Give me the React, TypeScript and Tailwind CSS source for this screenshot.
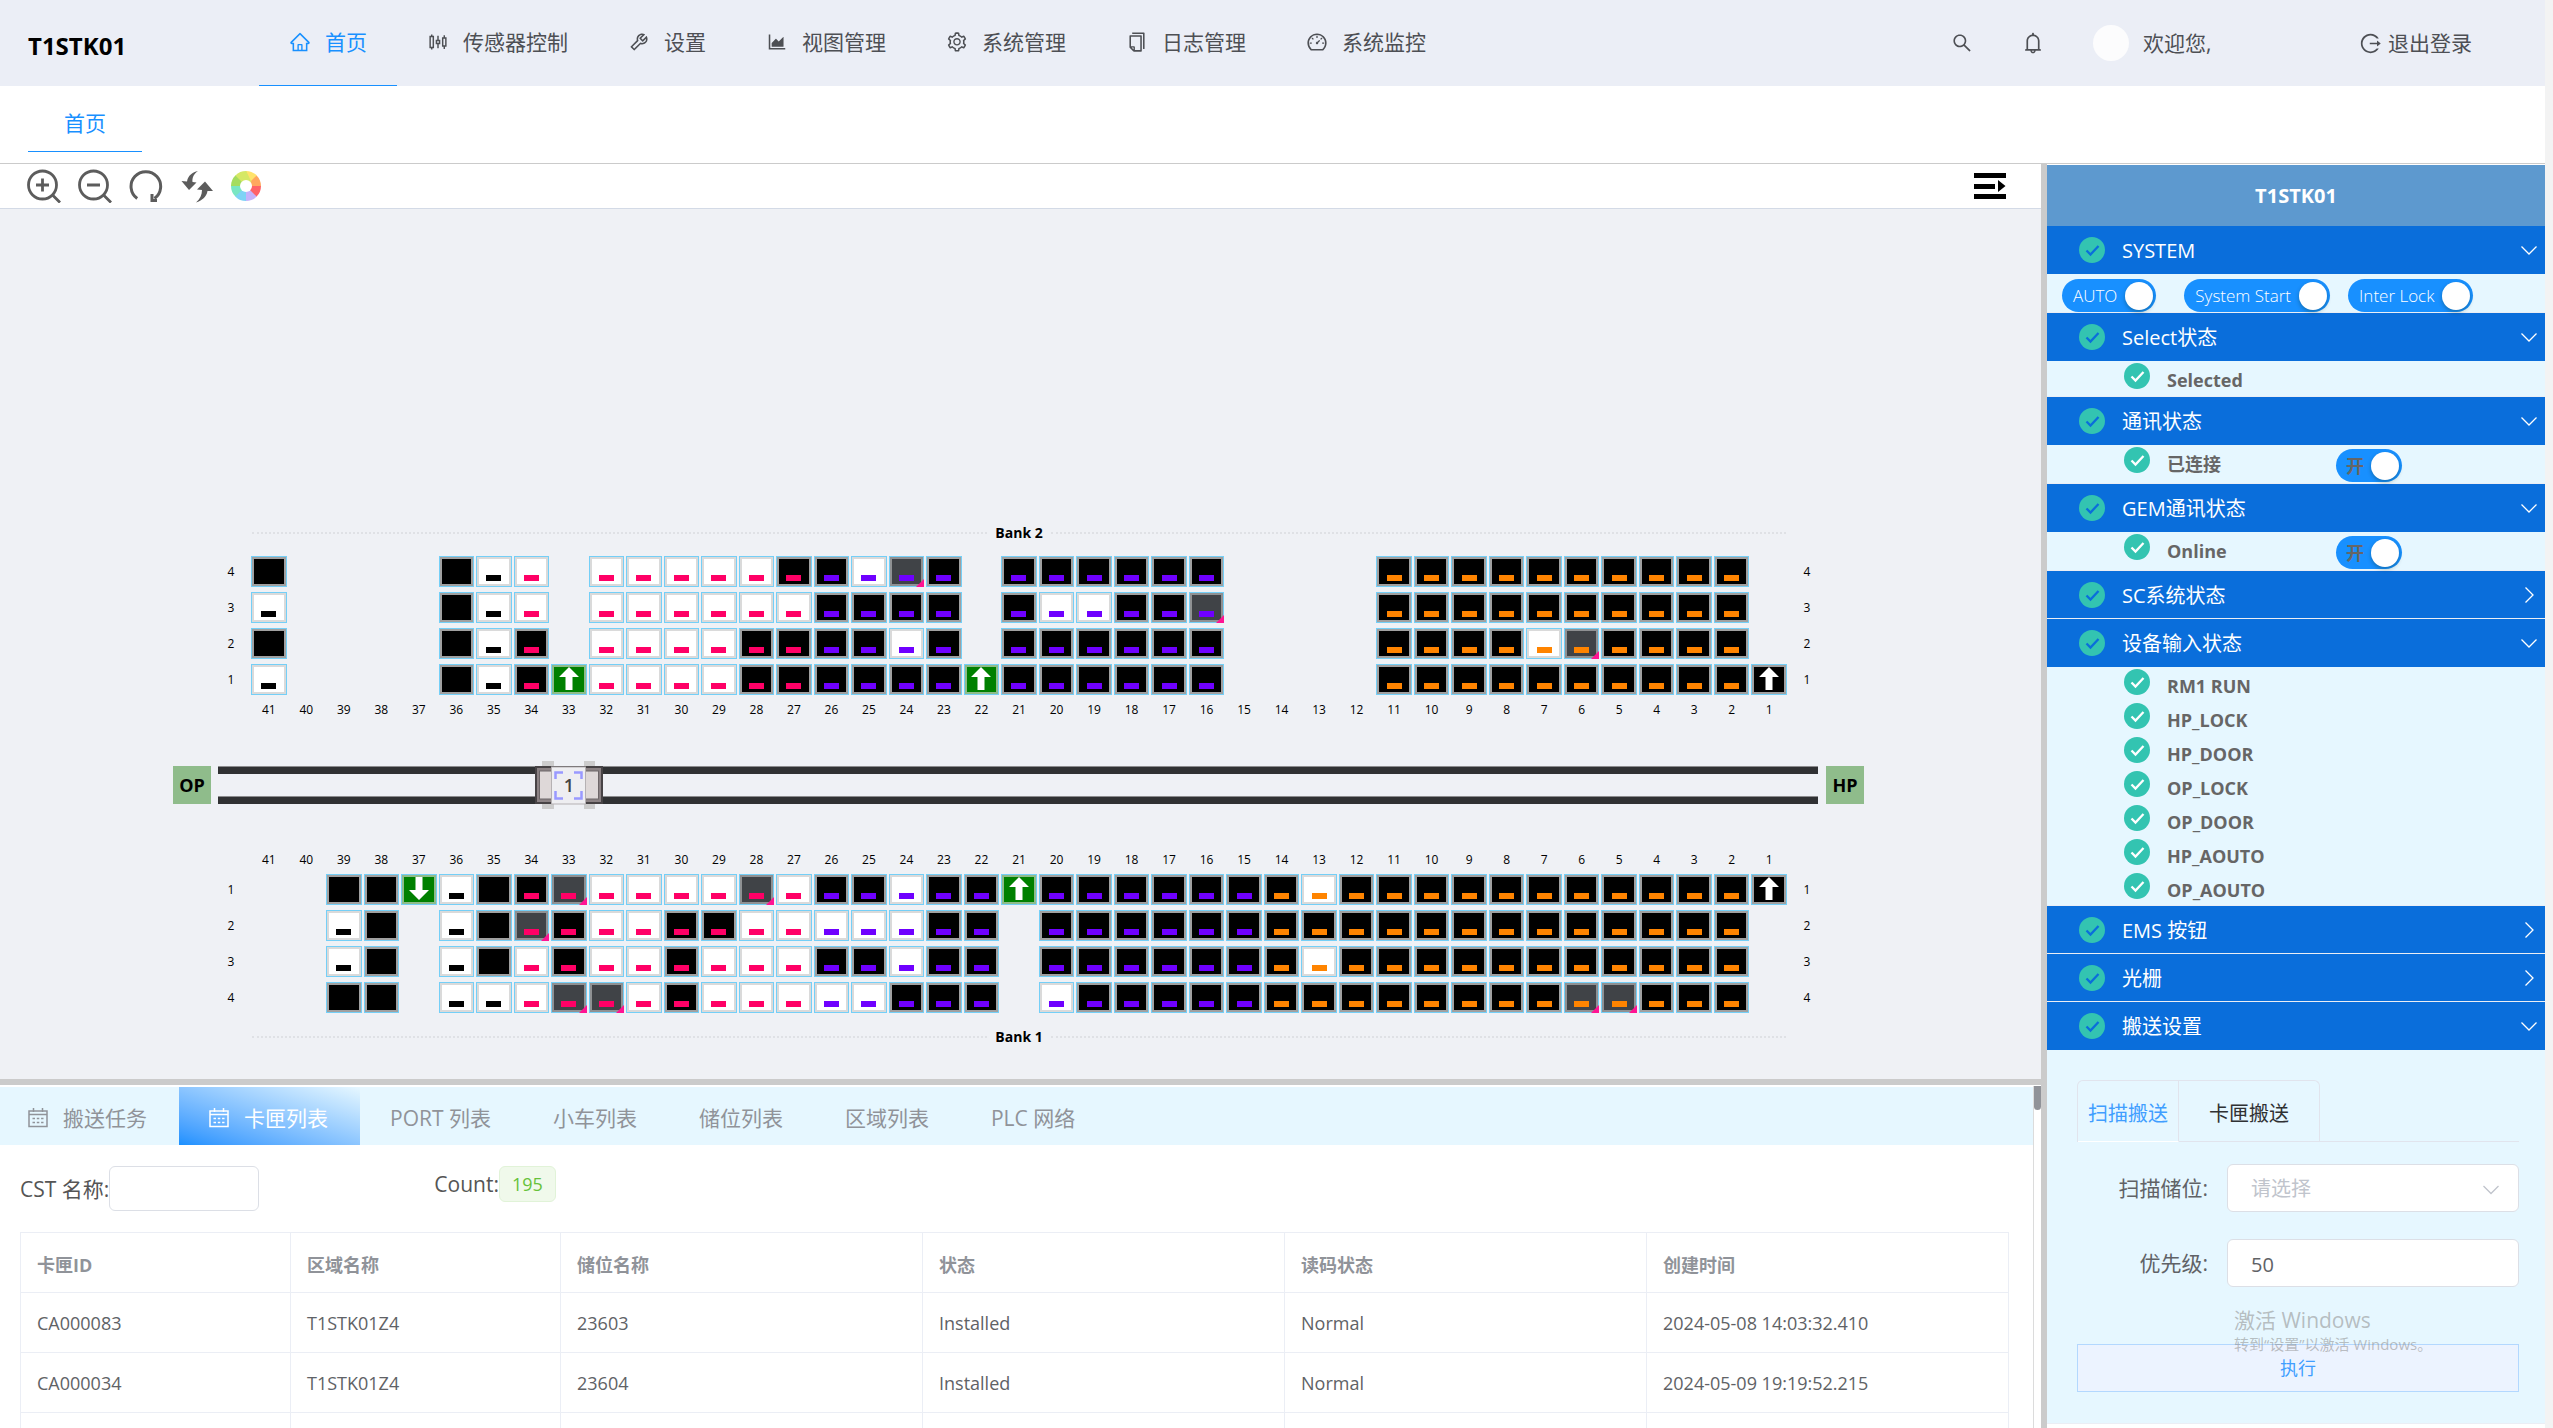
import clsx from "clsx";
import { useState } from "react";
import type { ReactNode } from "react";
import {
  AiOutlineAreaChart,
  AiOutlineBell,
  AiOutlineCopy,
  AiOutlineDashboard,
  AiOutlineHome,
  AiOutlineLogout,
  AiOutlineSearch,
  AiOutlineSetting,
  AiOutlineSliders,
  AiOutlineTool,
} from "react-icons/ai";

const navItems = [
  { title: "首页", icon: AiOutlineHome },
  { title: "传感器控制", icon: AiOutlineSliders },
  { title: "设置", icon: AiOutlineTool },
  { title: "视图管理", icon: AiOutlineAreaChart },
  { title: "系统管理", icon: AiOutlineSetting },
  { title: "日志管理", icon: AiOutlineCopy },
  { title: "系统监控", icon: AiOutlineDashboard },
];

const listTabs = [
  { title: "搬送任务", icon: true },
  { title: "卡匣列表", icon: true },
  { title: "PORT 列表" },
  { title: "小车列表" },
  { title: "储位列表" },
  { title: "区域列表" },
  { title: "PLC 网络" },
];

const inputStates = ["RM1 RUN", "HP_LOCK", "HP_DOOR", "OP_LOCK", "OP_DOOR", "HP_AOUTO", "OP_AOUTO"];

const columns = Array.from({ length: 41 }, (_, i) => 41 - i);

// one char per shelf, bay 41 -> 1
// . none, K disabled, B empty, W stored, G reserved, U/D port, A manual port
const bank2 = [
  { level: 4, cells: "K....KWW.WWWWWBBWGB.BBBBBB....BBBBBBBBBB." },
  { level: 3, cells: "W....KWW.WWWWWWBBBB.BWWBBG....BBBBBBBBBB." },
  { level: 2, cells: "K....KWB.WWWWBBBBWB.BBBBBB....BBBBWGBBBB." },
  { level: 1, cells: "W....KWBUWWWWBBBBBBUBBBBBB....BBBBBBBBBBA" },
];
const bank1 = [
  { level: 1, cells: "..KKDWKBGWWWWGWBBWBBUBBBBBBBWBBBBBBBBBBBA" },
  { level: 2, cells: "..WK.WKGBWWBBWWWWWBB.BBBBBBBBBBBBBBBBBBB." },
  { level: 3, cells: "..WK.WKWBWWBWWWBBWBB.BBBBBBBWBBBBBBBBBBB." },
  { level: 4, cells: "..KK.WWWGGWBWWWWWBBB.WBBBBBBBBBBBBBGGBBB." },
];

const cassettes = [
  { id: "CA000083", zone: "T1STK01Z4", shelf: "23603", state: "Installed", read: "Normal", time: "2024-05-08 14:03:32.410" },
  { id: "CA000034", zone: "T1STK01Z4", shelf: "23604", state: "Installed", read: "Normal", time: "2024-05-09 19:19:52.215" },
  { id: "", zone: "", shelf: "", state: "", read: "", time: "" },
];

function zoneColor(bay: number) {
  if (bay >= 35) return "bg-black";
  if (bay >= 27) return "bg-[#ff0066]";
  if (bay >= 15) return "bg-[#6f00ff]";
  return "bg-[#ff8400]";
}

function Arrow({ down }: { down?: boolean }) {
  return (
    <svg viewBox="0 0 20 23" className={clsx("h-[23px] w-5", down && "rotate-180")}>
      <path d="M10 0 20 10H13.5V23H6.5V10H0Z" fill="#fff" />
    </svg>
  );
}

function Shelf({ type, bay }: { type: string; bay: number }) {
  if (type === ".") return <div />;
  const port = type === "U" || type === "D";
  return (
    <div className="relative mx-px h-[31px] border border-[#74cff7]">
      <div
        className={clsx(
          "flex h-full w-full justify-center border-2",
          type === "W" && "border-[#dadada] bg-white",
          type === "G" && "border-[#8f9193] bg-[#404347]",
          port && "border-[#8fbc8b] bg-[#008000]",
          (type === "B" || type === "K" || type === "A") && "border-[#a0a0a0] bg-black"
        )}
      >
        {(port || type === "A") && <Arrow down={type === "D"} />}
        {(type === "B" || type === "W" || type === "G") && (
          <span className={clsx("mt-4 h-[6px] w-[15px]", zoneColor(bay))} />
        )}
      </div>
      {type === "G" && (
        <svg viewBox="0 0 8 8" className="absolute -right-px -bottom-px h-2 w-2">
          <path d="M8 0V8H0Z" fill="#ff1493" />
        </svg>
      )}
    </div>
  );
}

function BankRow({ level, cells }: { level: number; cells: string }) {
  return (
    <div className="flex items-center text-[12px] leading-4">
      <span className="w-[38px] text-center">{level}</span>
      <div className="grid flex-1 grid-cols-[repeat(41,minmax(0,1fr))]">
        {columns.map((bay, i) => (
          <Shelf key={bay} bay={bay} type={cells[i]} />
        ))}
      </div>
      <span className="w-[38px] text-center">{level}</span>
    </div>
  );
}

function BayNumbers() {
  return (
    <div className="mx-[38px] grid grid-cols-[repeat(41,minmax(0,1fr))] text-center text-[12px] leading-4">
      {columns.map((bay) => (
        <span key={bay}>{bay}</span>
      ))}
    </div>
  );
}

function BankTitle({ title }: { title: string }) {
  return (
    <div className="mx-10 flex items-center gap-2 text-[14px] leading-5 font-bold">
      <span className="flex-1 border-t-2 border-dotted border-[#dfe1e5]" />
      {title}
      <span className="flex-1 border-t-2 border-dotted border-[#dfe1e5]" />
    </div>
  );
}

function Crane() {
  return (
    <svg viewBox="0 0 68 48" className="absolute top-1/2 left-[22%] h-12 w-[68px] -translate-y-1/2">
      <path d="M7 0h12v48H7ZM49 0h11v48H49Z" fill="#cccccc" />
      <rect x="1" y="6" width="66" height="36" fill="#8b8284" stroke="#474345" strokeWidth="2" />
      <rect x="4.500" y="10" width="59" height="28" fill="#ded8d8" stroke="#6d6668" />
      <rect x="16.500" y="6" width="34" height="37" fill="#eeeef1" stroke="#b5b1b3" />
      <path
        d="M20.500 18V11.500H28M39 11.500H46.500V18M46.500 30V37.500H39M28 37.500H20.500V30"
        fill="none"
        stroke="#9999ff"
        strokeWidth="2.500"
      />
      <text x="34" y="31" textAnchor="middle" fontSize="18" fontWeight="600" fill="#444">
        1
      </text>
    </svg>
  );
}

function StockerMap() {
  return (
    <div className="flex flex-1 flex-col justify-end bg-[#eff1f5] pr-[177px] pb-8 pl-[173px] text-black">
      <div className="mr-[38px] ml-[39px]">
        <BankTitle title="Bank 2" />
        <div className="mt-[13px] flex flex-col gap-[5px]">
          {bank2.map((row) => (
            <BankRow key={row.level} {...row} />
          ))}
        </div>
        <div className="mt-[7px]">
          <BayNumbers />
        </div>
      </div>
      <div className="my-12 flex h-[38px] items-center text-[18px] leading-6 font-bold">
        <span className="flex h-full w-[38px] items-center justify-center bg-[#8fbc8b]">OP</span>
        <div className="relative mr-2 ml-[7px] flex h-full flex-1 flex-col justify-between">
          <span className="h-2 border-t border-[#8c8c8e] bg-[#303133]" />
          <span className="h-2 border-t border-[#8c8c8e] bg-[#303133]" />
          <div className="absolute inset-y-0 left-0 w-[90%]">
            <Crane />
          </div>
        </div>
        <span className="flex h-full w-[38px] items-center justify-center bg-[#8fbc8b]">HP</span>
      </div>
      <div className="mr-[38px] ml-[39px]">
        <BayNumbers />
        <div className="mt-[6px] flex flex-col gap-[5px]">
          {bank1.map((row) => (
            <BankRow key={row.level} {...row} />
          ))}
        </div>
        <div className="mt-[14px]">
          <BankTitle title="Bank 1" />
        </div>
      </div>
    </div>
  );
}

function CalendarIcon() {
  return (
    <svg viewBox="0 0 20 20" className="h-5 w-5" fill="none" stroke="currentColor" strokeWidth="1.500">
      <path d="M1 3H19V18.500H1ZM1 6.500H19M5.500 0V4M14.500 0V4" />
      <path d="M4.500 10.500H15.500M4.500 14.500H15.500" strokeDasharray="2.500 1.800" />
    </svg>
  );
}

function ColorWheel() {
  const colors = ["#ffe36b", "#ffa75f", "#ff6268", "#c5b3fb", "#7fd3f5", "#79e6c3", "#a5dc5f", "#d5e866"];
  return (
    <svg viewBox="-15 -15 30 30" className="h-[30px] w-[30px]">
      {colors.map((color, i) => (
        <path key={color} d="M0-15A15 15 0 0 1 10.800-10.400L6.500 1.500 0-6Z" fill={color} transform={`rotate(${i * 45})`} />
      ))}
      <circle r="6" fill="#fff" />
    </svg>
  );
}

function Toolbar() {
  const btn = "flex h-[34px] w-[34px] items-center";
  return (
    <div className="flex h-[45px] items-center border-b border-[#d3dae6] bg-white pr-[35px] pl-[27px] text-[#5c5c5c]">
      <div className="flex flex-1 gap-[17px]">
        <button className={btn} aria-label="放大">
          <svg viewBox="0 0 34 34" fill="none" stroke="currentColor" strokeWidth="2.800">
            <circle cx="15.500" cy="16" r="14" />
            <path d="M25.500 26 33 33.500M9 16H22M15.500 9.500V22.500" />
          </svg>
        </button>
        <button className={btn} aria-label="缩小">
          <svg viewBox="0 0 34 34" fill="none" stroke="currentColor" strokeWidth="2.800">
            <circle cx="15.500" cy="16" r="14" />
            <path d="M25.500 26 33 33.500M9 16H22" />
          </svg>
        </button>
        <button className={btn} aria-label="重置">
          <svg viewBox="0 0 34 34" fill="none" stroke="currentColor" strokeWidth="3">
            <path d="M8.200 29.500A14.800 14.800 0 1 1 25.500 29.500" />
            <path d="M23 25V31.500H28" strokeWidth="3" />
          </svg>
        </button>
        <button className={btn} aria-label="刷新">
          <svg viewBox="0 0 34 34" fill="currentColor">
            <path d="M18 2C12.500 3 8 6.500 7 12.500L1.500 12 9 21 16.500 13.500 12.500 13C12 8.500 14 4.500 18 2Z" />
            <path d="M16 33.500C22 31.500 26.500 28 27.500 22L33 22 25 12.500 17 20.500 22 21C22 26 20 30 16 33.500Z" />
          </svg>
        </button>
        <button className={btn} aria-label="颜色">
          <ColorWheel />
        </button>
      </div>
      <button aria-label="展开" className="text-black">
        <svg viewBox="0 0 32 26" className="h-[26px] w-8" fill="currentColor">
          <path d="M0 0H32V5H0ZM0 11H21V16H0ZM0 21H32V26H0ZM24 7 31.500 13 24 19Z" />
        </svg>
      </button>
    </div>
  );
}

function CheckCircle({ color }: { color: string }) {
  return (
    <svg viewBox="0 0 26 26" className="h-[26px] w-[26px] shrink-0">
      <circle cx="13" cy="13" r="13" fill="#33c4b1" />
      <path d="M7.500 13.500 11.500 17.500 19.500 9" fill="none" stroke={color} strokeWidth="2.300" />
    </svg>
  );
}

function Switch({ text, dark }: { text: string; dark?: boolean }) {
  const [on, setOn] = useState(true);
  return (
    <label
      className={clsx(
        "flex h-[33px] cursor-pointer items-center rounded-full pr-[3px]",
        on ? "bg-[#1890ff]" : "bg-gray-400",
        dark ? "gap-[7px] pl-[10px] text-[18px] text-[#666]" : "gap-2 pl-[11px] text-[17px] font-light text-white"
      )}
    >
      <input type="checkbox" className="sr-only" checked={on} onChange={(e) => setOn(e.target.checked)} />
      {text}
      <span className="h-7 w-7 rounded-full bg-white shadow-[0_2px_4px_rgba(0,35,11,0.3)]" />
    </label>
  );
}

function Panel({ title, children }: { title: string; children?: ReactNode }) {
  const open = !!children;
  return (
    <section className="border-b border-[#ebeef5]">
      <button
        aria-expanded={open}
        className={clsx(
          "flex w-full items-center bg-[#0a6edb] pr-2 pl-8 text-left text-[20px] leading-7 text-white",
          open ? "h-12" : "h-[47px]"
        )}
      >
        <CheckCircle color="#0a6edb" />
        <span className="ml-[17px] flex-1 pt-[2px]">{title}</span>
        <svg
          viewBox="0 0 16 16"
          className={clsx("h-4 w-4", !open && "-rotate-90")}
          fill="none"
          stroke="currentColor"
          strokeWidth="1.300"
        >
          <path d="M.5 4.500 8 12 15.500 4.500" />
        </svg>
      </button>
      {children}
    </section>
  );
}

function StateRow({ text, children }: { text: string; children?: ReactNode }) {
  return (
    <div className="flex h-[34px] pl-[77px] text-[18px] leading-6 font-bold text-[#666]">
      <div className="flex w-[212px] gap-[17px] pt-[2px]">
        <CheckCircle color="#fff" />
        <span className="pt-[5px]">{text}</span>
      </div>
      {children && <div className="pt-1">{children}</div>}
    </div>
  );
}

function TransferForm() {
  return (
    <form className="pt-[30px] pr-[26px] pb-[31px] pl-[30px]" onSubmit={(e) => e.preventDefault()}>
      <div className="flex border-b border-[#e1e4ed] text-[20px] leading-6">
        <div className="-mb-px flex h-[62px] rounded-t-md border border-b-0 border-[#e1e4ed]">
          <button type="button" className="border-r border-b border-r-[#e1e4ed] border-b-white px-[10px] pt-[6px] text-[#409eff]">
            扫描搬送
          </button>
          <button type="button" className="border-b border-[#e1e4ed] px-[30px] pt-[6px] text-[#303133]">
            卡匣搬送
          </button>
        </div>
      </div>
      <div className="mt-[22px] flex items-center text-[21px] leading-7 text-[#606266]">
        <label htmlFor="scanShelf" className="w-[131px] text-right">
          扫描储位:
        </label>
        <div className="relative ml-[19px] flex-1">
          <select
            id="scanShelf"
            className="h-12 w-full appearance-none rounded-md border border-[#dcdfe6] bg-white pt-[2px] pl-[23px] text-[20px] text-[#c0c4cc]"
          >
            <option>请选择</option>
          </select>
          <svg
            viewBox="0 0 16 16"
            className="pointer-events-none absolute top-[18px] right-5 h-4 w-4"
            fill="none"
            stroke="#c0c4cc"
            strokeWidth="1.300"
          >
            <path d="M.5 4 8 11.500 15.500 4" />
          </svg>
        </div>
      </div>
      <div className="mt-[27px] flex items-center text-[21px] leading-7 text-[#606266]">
        <label htmlFor="priority" className="w-[131px] text-right">
          优先级:
        </label>
        <input
          id="priority"
          defaultValue="50"
          className="ml-[19px] h-12 min-w-0 flex-1 rounded-md border border-[#dcdfe6] bg-white pt-[2px] pl-[23px] text-[20px]"
        />
      </div>
      <div className="relative mt-[57px]">
        <button className="h-12 w-full border border-[#b3d8ff] bg-[#ecf3ff] text-[18px] text-[#409eff]">执行</button>
        <div className="pointer-events-none absolute -top-[38px] left-[157px] whitespace-nowrap text-[#8c8c8c]/55">
          <p className="text-[21px] leading-7">激活 Windows</p>
          <p className="text-[15px] leading-5">转到“设置”以激活 Windows。</p>
        </div>
      </div>
    </form>
  );
}

function SidePanel() {
  return (
    <aside className="w-[498px] shrink-0 bg-white pt-px">
      <div className="bg-[#e6f7ff]">
        <h2 className="bg-[#5d99cf] pt-[17px] pb-4 text-center text-[20px] leading-7 font-bold text-white">T1STK01</h2>
        <Panel title="SYSTEM">
          <div className="flex h-[38px] items-end gap-x-[18px] pl-[15px]">
            <Switch text="AUTO" />
            <div className="ml-[10px]">
              <Switch text="System Start" />
            </div>
            <Switch text="Inter Lock" />
          </div>
        </Panel>
        <Panel title="Select状态">
          <div className="pb-px">
            <StateRow text="Selected" />
          </div>
        </Panel>
        <Panel title="通讯状态">
          <div className="pb-1">
            <StateRow text="已连接">
              <Switch text="开" dark />
            </StateRow>
          </div>
        </Panel>
        <Panel title="GEM通讯状态">
          <div className="pb-1">
            <StateRow text=" Online">
              <Switch text="开" dark />
            </StateRow>
          </div>
        </Panel>
        <Panel title="SC系统状态" />
        <Panel title="设备输入状态">
          {inputStates.map((it) => (
            <StateRow key={it} text={it} />
          ))}
        </Panel>
        <Panel title="EMS 按钮" />
        <Panel title="光栅" />
        <Panel title="搬送设置">
          <TransferForm />
        </Panel>
      </div>
    </aside>
  );
}

function CassetteList() {
  const [tab, setTab] = useState(1);
  return (
    <div className="flex h-[349px] shrink-0 overflow-hidden border-t-[6px] border-[#cbcbcb] bg-white pt-px">
      <div className="min-w-0 flex-1 border-r border-[#dcdcdc] pt-px">
        <div className="flex h-[58px] bg-[#e6f7ff] text-[21px] leading-7 text-[#909399]">
          {listTabs.map((it, i) => (
            <button
              key={it.title}
              onClick={() => setTab(i)}
              className={clsx(
                "flex items-center gap-[15px] pt-1 pr-8",
                i === 0 ? "pl-7" : "pl-[30px]",
                i === tab && "bg-linear-to-tr from-[#1890ff] to-[#e6f7ff] text-white"
              )}
            >
              {it.icon && <CalendarIcon />}
              {it.title}
            </button>
          ))}
        </div>
        <div className="pt-[21px] pr-6 pl-5">
          <div className="flex h-[66px] items-start text-[21px] leading-7 text-[#555]">
            <label htmlFor="cst" className="pt-[9px]">
              CST 名称:
            </label>
            <input id="cst" className="h-[45px] w-[150px] rounded-md border border-[#dcdfe6]" />
            <span className="ml-[175px] pt-1">Count:</span>
            <span className="flex h-9 items-center rounded-md border border-[#e1f3d8] bg-[#f0f9eb] px-3 text-[18px] text-[#67c23a]">
              195
            </span>
          </div>
          <table className="w-full table-fixed border-collapse text-left text-[18px] leading-6 text-[#606266]">
            <colgroup>
              <col className="w-[270px]" />
              <col className="w-[270px]" />
              <col />
              <col />
              <col />
              <col />
            </colgroup>
            <thead>
              <tr className="h-[60px] text-[#909399]">
                {["卡匣ID", "区域名称", "储位名称", "状态", "读码状态", "创建时间"].map((it) => (
                  <th key={it} className="border border-[#ebeef5] pt-1 pl-4 font-bold">
                    {it}
                  </th>
                ))}
              </tr>
            </thead>
            <tbody>
              {cassettes.map((row, i) => (
                <tr key={i} className="h-[60px]">
                  {Object.values(row).map((value, j) => (
                    <td key={j} className="border border-[#ebeef5] pl-4">
                      {value}
                    </td>
                  ))}
                </tr>
              ))}
            </tbody>
          </table>
        </div>
      </div>
      <div className="w-[7px] bg-white">
        <div className="h-6 rounded-b-full bg-[#909399]" />
      </div>
    </div>
  );
}

function Header() {
  return (
    <header className="flex h-[86px] shrink-0 bg-[#ebeef6] pr-[73px] text-[21px] leading-7 text-[#4d4f54]">
      <h1 className="w-[259px] pt-8 pl-7 text-[24px] font-bold text-black">T1STK01</h1>
      <nav className="flex flex-1">
        {navItems.map(({ title, icon: Icon }, i) => (
          <a
            key={title}
            href="#"
            className={clsx(
              "flex items-center gap-[14px] border-b px-[30px] pb-[2px]",
              i === 0 ? "border-[#1890ff] text-[#1890ff]" : "border-transparent"
            )}
          >
            <Icon className="h-[22px] w-[22px]" />
            {title}
          </a>
        ))}
      </nav>
      <div className="flex items-center">
        <button aria-label="搜索">
          <AiOutlineSearch className="h-[22px] w-[22px]" />
        </button>
        <button aria-label="通知" className="ml-12">
          <AiOutlineBell className="h-6 w-6" />
        </button>
        <span className="ml-12 h-9 w-9 rounded-full bg-[#fcfcfd]" />
        <span className="ml-[14px] w-[216px]">欢迎您,</span>
        <button className="flex items-center gap-[6px]">
          <AiOutlineLogout className="h-[23px] w-[23px]" />
          退出登录
        </button>
      </div>
    </header>
  );
}

export default function App() {
  return (
    <div className="flex h-screen flex-col overflow-hidden border-r-8 border-[#f3f3f3] bg-white font-['Open_Sans','Noto_Sans_CJK_SC',sans-serif]">
      <Header />
      <div className="h-[78px] shrink-0 border-b border-[#cbcbcb] px-7 text-[21px] leading-7 text-[#1890ff]">
        <button className="h-[66px] border-b border-[#1890ff] px-9 pt-2">首页</button>
      </div>
      <div className="flex min-h-0 flex-1">
        <main className="flex min-w-0 flex-1 flex-col">
          <Toolbar />
          <StockerMap />
          <CassetteList />
        </main>
        <div className="w-[6px] shrink-0 bg-[#cbcbcb]" />
        <SidePanel />
      </div>
    </div>
  );
}
